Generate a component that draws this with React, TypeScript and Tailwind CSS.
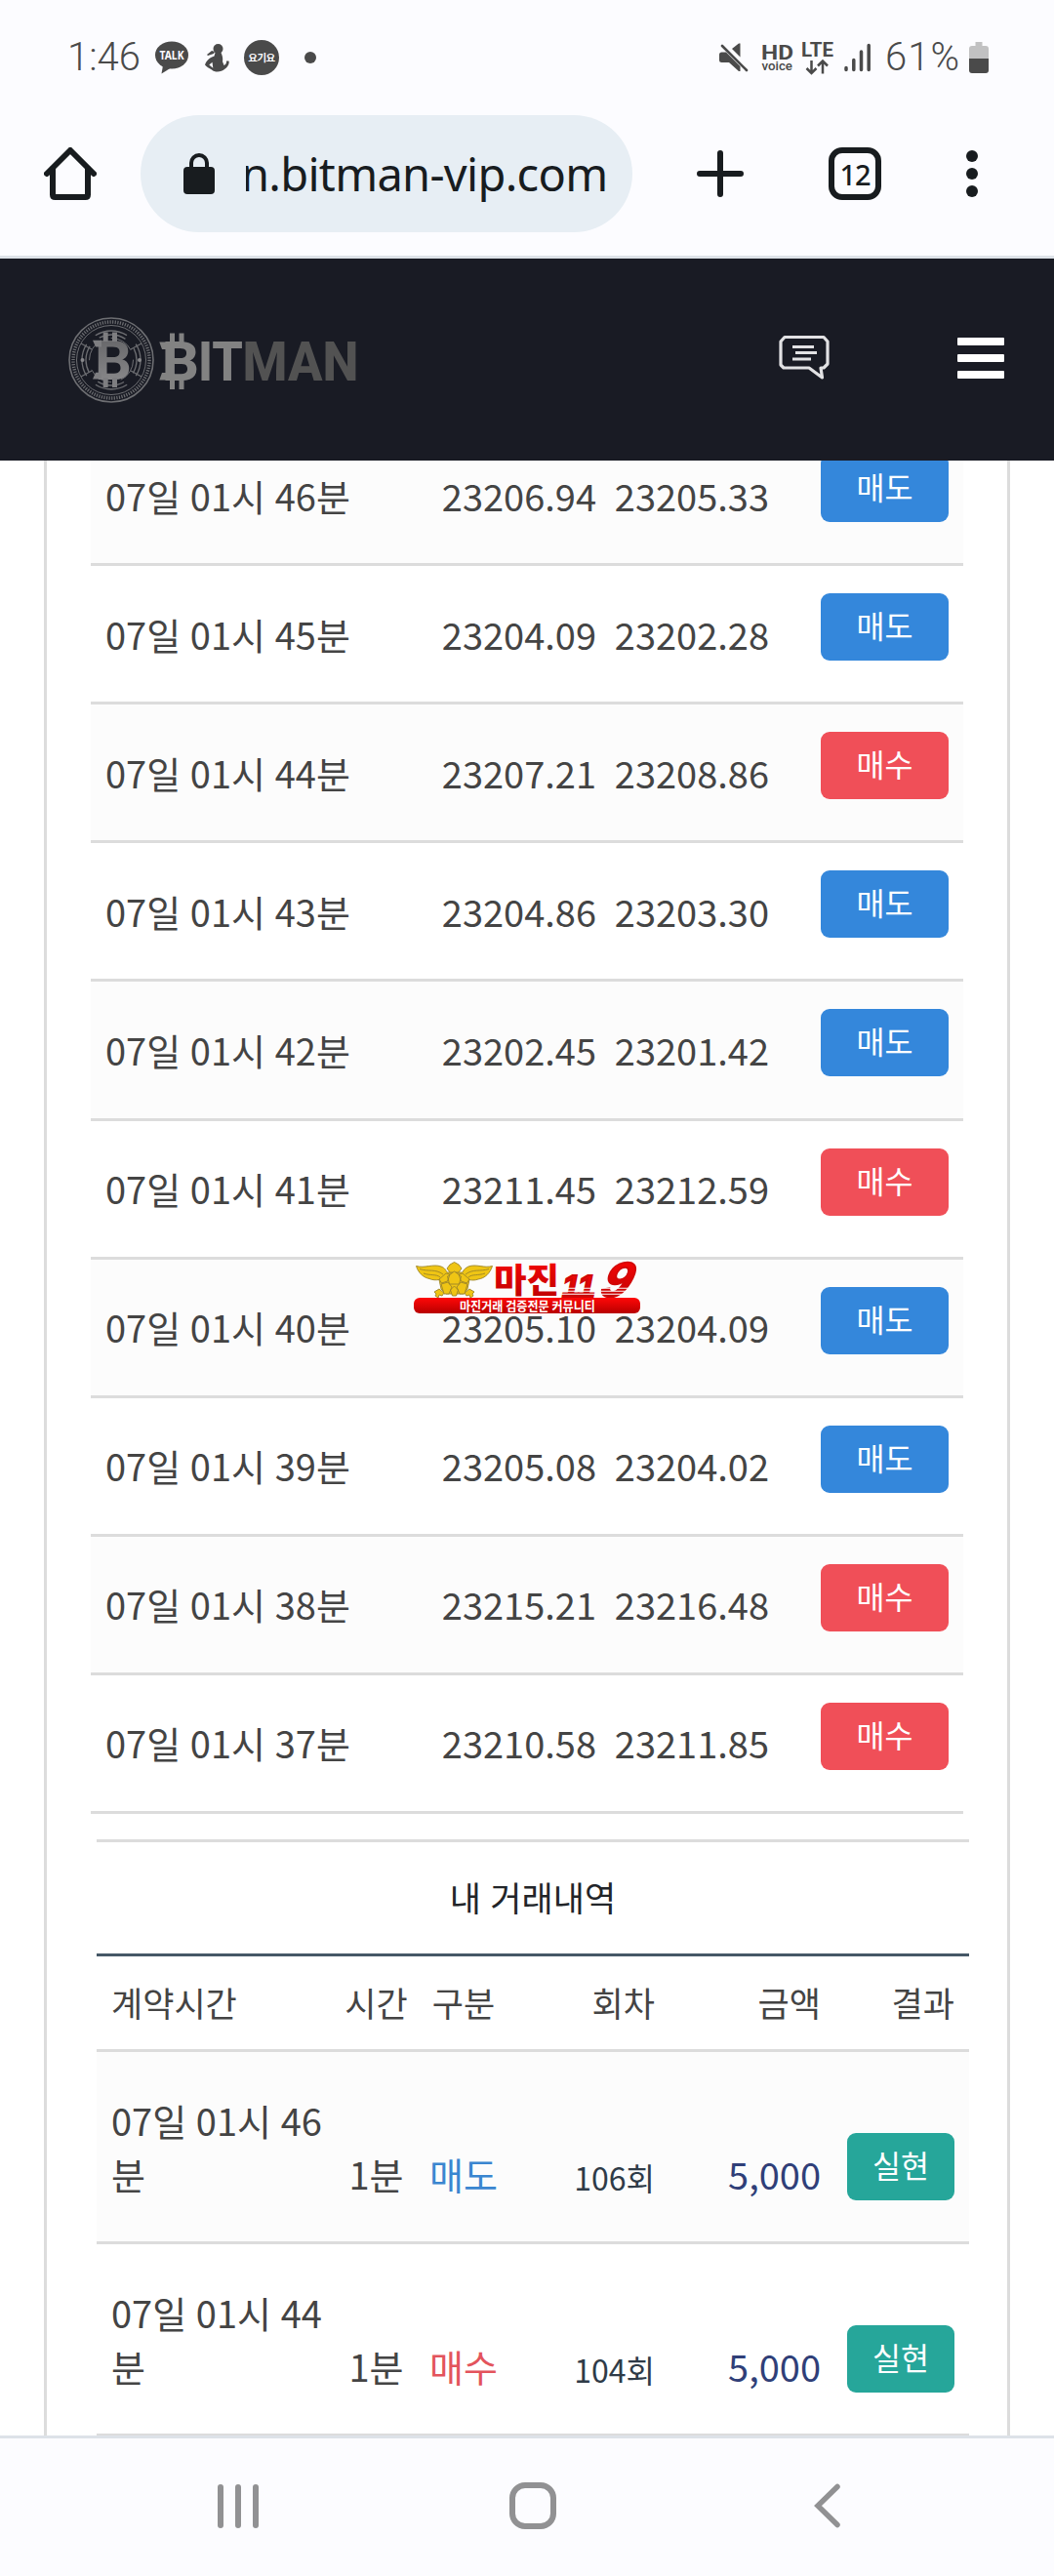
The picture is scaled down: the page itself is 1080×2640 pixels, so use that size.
type Side = "매도" | "매수";

const history: { minute: number; open: string; close: string; side: Side }[] = [
  { minute: 46, open: "23206.94", close: "23205.33", side: "매도" },
  { minute: 45, open: "23204.09", close: "23202.28", side: "매도" },
  { minute: 44, open: "23207.21", close: "23208.86", side: "매수" },
  { minute: 43, open: "23204.86", close: "23203.30", side: "매도" },
  { minute: 42, open: "23202.45", close: "23201.42", side: "매도" },
  { minute: 41, open: "23211.45", close: "23212.59", side: "매수" },
  { minute: 40, open: "23205.10", close: "23204.09", side: "매도" },
  { minute: 39, open: "23205.08", close: "23204.02", side: "매도" },
  { minute: 38, open: "23215.21", close: "23216.48", side: "매수" },
  { minute: 37, open: "23210.58", close: "23211.85", side: "매수" },
];

const trades: { minute: number; side: Side; round: string; amount: string }[] = [
  { minute: 46, side: "매도", round: "106회", amount: "5,000" },
  { minute: 44, side: "매수", round: "104회", amount: "5,000" },
];

function StatusBar() {
  return (
    <div className="flex h-[118px] items-start justify-between pt-[36px] pr-[67px] pl-[69px] text-[#4a4a4a]">
      <div className="flex h-[46px] items-center">
        <span className="w-[90px] font-['Roboto'] text-[40px] leading-[46px] font-light">1:46</span>
        <svg width="34" height="34" viewBox="0 0 34 34" fill="#4a4a4a">
          <ellipse cx="17" cy="14.5" rx="17" ry="14" />
          <path d="M8 25 L6.5 33.5 L17 27 Z" />
          <text x="17" y="19" fill="#fcfcff" fontFamily="Noto Sans" fontWeight="700" fontSize="12" textAnchor="middle" textLength="25" lengthAdjust="spacingAndGlyphs">TALK</text>
        </svg>
        <svg className="ml-[17px]" width="25" height="29" viewBox="0 0 25 29" fill="#4a4a4a">
          <circle cx="13.5" cy="5" r="5" />
          <path d="M2 11 L7 7 L10 8 L9 10 L3 12 Z" />
          <path fillRule="evenodd" d="M10.500 9 L16.500 9 C18 12 18.500 15 18 18 L19.500 22 C21.500 21 22.200 19.500 22 17.500 L24.500 17.500 C25.500 21 22.500 24 20 26 C17 29 10 29.500 7 26.500 C4 25 2 23.500 0 21.500 C1 18 4.500 14 9.500 12.500 Z M4.300 21.500 L8.300 24.700 L7.500 18.800 Z" />
        </svg>
        <div className="ml-[15px] flex size-[36px] items-center justify-center rounded-full bg-[#4a4a4a] font-['Noto_Sans_CJK_KR'] text-[10.500px] leading-none font-bold tracking-[-0.500px] whitespace-nowrap text-[#fcfcff]">
          요기요
        </div>
        <div className="ml-[26px] size-[12px] rounded-full bg-[#4a4a4a]" />
      </div>
      <div className="flex h-[46px] items-center">
        <svg width="30" height="30" viewBox="0 0 30 30" fill="#4a4a4a">
          <path d="M0 12 Q0 9.500 2.500 9.500 L7 9.500 L21.500 24 L21.500 29 L20 29 L10 20 L2.500 20 Q0 20 0 17.500 Z" />
          <path d="M13 6 L20 .6 L21.500 .6 L21.500 14.500 Z" />
          <path d="M3 3 L28 28" stroke="#4a4a4a" strokeWidth="2.600" strokeLinecap="round" />
        </svg>
        <svg className="ml-[13px] overflow-visible" width="33" height="32" viewBox="0 0 33 32" fill="#4a4a4a">
          <text x="0" y="18" fontFamily="Roboto" fontWeight="700" fontSize="20.500" textLength="33" lengthAdjust="spacingAndGlyphs">HD</text>
          <text x="0.500" y="29" fontFamily="Roboto" fontWeight="500" fontSize="13" textLength="31.500" lengthAdjust="spacingAndGlyphs">voice</text>
        </svg>
        <svg className="ml-[8px] overflow-visible" width="33" height="36" viewBox="0 0 33 36" fill="#4a4a4a">
          <text x="0" y="16.700" fontFamily="Roboto" fontWeight="700" fontSize="20.500" textLength="33" lengthAdjust="spacingAndGlyphs">LTE</text>
          <path d="M10.500 21 V34 M5.500 29 L10.500 34 L15.500 29 M22 34.500 V21.500 M17 26.500 L22 21.500 L27 26.500" fill="none" stroke="#4a4a4a" strokeWidth="2.500" />
        </svg>
        <svg className="ml-[11px]" width="28" height="30" viewBox="0 0 28 30" stroke="#4a4a4a" strokeWidth="3.500" strokeLinecap="round">
          <path d="M2 25.500V27.500M9.800 17.500V27.500M17.500 9V27.500M25.200 2.500V27.500" />
        </svg>
        <span className="ml-[14px] w-[86px] font-['Roboto'] text-[40px] leading-[46px] font-light tracking-[1px]">61%</span>
        <svg width="20" height="32" viewBox="0 0 20 32">
          <path d="M6.500 0H13.500V4H17Q20 4 20 7V18H0V7Q0 4 3 4H6.500Z" fill="#c1c1c2" />
          <path d="M0 17H20V29Q20 32 17 32H3Q0 32 0 29Z" fill="#4a4a4a" />
        </svg>
      </div>
    </div>
  );
}

function BrowserBar() {
  return (
    <div className="flex h-[120px] items-center pl-[45px]">
      <svg width="54" height="54" viewBox="0 0 54 54" fill="none" stroke="#181c1f" strokeWidth="6" strokeLinecap="round" strokeLinejoin="round">
        <path d="M3 27 L27 3 L51 27" />
        <path d="M9 22 V48.500 Q9 51 11.500 51 H42.500 Q45 51 45 48.500 V22" />
      </svg>
      <div className="ml-[45px] flex h-[120px] w-[504px] items-center rounded-full bg-[#e7eef4] pl-[44px]">
        <svg width="32" height="42" viewBox="0 0 32 42">
          <path d="M8 16V10a8 8 0 0 1 16 0v6" fill="none" stroke="#181c1f" strokeWidth="4" />
          <rect y="14" width="32" height="28" rx="4" fill="#181c1f" />
        </svg>
        <div className="ml-[32px] flex w-[374px] overflow-hidden">
          <span className="-ml-[5px] font-['Noto_Sans'] text-[47px] leading-[64px] tracking-[-0.700px] whitespace-nowrap text-[#181c1f]">n.bitman-vip.com</span>
        </div>
      </div>
      <svg className="ml-[66px]" width="48" height="48" viewBox="0 0 48 48" stroke="#181c1f" strokeWidth="6" strokeLinecap="round">
        <path d="M24 3V45M3 24H45" />
      </svg>
      <div className="ml-[87px] flex size-[54px] items-center justify-center rounded-[14px] border-[6px] border-[#181c1f] font-['Noto_Sans'] text-[29px] leading-none font-medium tracking-[-1px] text-[#181c1f]">
        12
      </div>
      <div className="ml-[87px] flex flex-col gap-[6px]">
        <div className="size-[12px] rounded-full bg-[#181c1f]" />
        <div className="size-[12px] rounded-full bg-[#181c1f]" />
        <div className="size-[12px] rounded-full bg-[#181c1f]" />
      </div>
    </div>
  );
}

function Logo() {
  return (
    <svg className="overflow-visible" width="300" height="92" viewBox="0 0 300 92">
      <defs>
        <linearGradient id="coin" x1="0" y1="0" x2="0" y2="1">
          <stop offset="0" stopColor="#5f5f62" />
          <stop offset="1" stopColor="#909092" />
        </linearGradient>
      </defs>
      <g fill="none" stroke="#6d6e72">
        <circle cx="46" cy="46" r="43" strokeWidth="1.600" />
        <circle cx="46" cy="46" r="39" strokeWidth="3.500" strokeDasharray="1.200 1.400" />
        <circle cx="46" cy="46" r="35.500" strokeWidth="1" />
        <circle cx="46" cy="46" r="30" strokeWidth="1.300" strokeDasharray="34 13" strokeDashoffset="17" />
        <circle cx="46" cy="46" r="26" strokeWidth="1.300" strokeDasharray="28 13" strokeDashoffset="14" />
        <circle cx="46" cy="46" r="22.500" strokeWidth="1" strokeDasharray="25 10" />
        <path d="M15 29L26 35M66 35L77 29M15 63L26 57M66 57L77 63" strokeWidth="1.300" />
      </g>
      <circle cx="16.500" cy="46" r="2" fill="#88888b" />
      <circle cx="75" cy="46" r="2" fill="#88888b" />
      <text x="29" y="65.500" fontFamily="Roboto" fontWeight="700" fontSize="56" fill="url(#coin)" textLength="38" lengthAdjust="spacingAndGlyphs">B</text>
      <path d="M27 25.700H36V32.500H30ZM27 65.500H36V58.700H30Z" fill="#7e7e81" />
      <path d="M37.700 17.500H42.700V27H37.700ZM47 17.500H52V27H47ZM37.700 64H42.700V74H37.700ZM47 64H52V74H47Z" fill="#7e7e81" />
      <text x="98" y="66.500" fontFamily="Roboto" fontWeight="800" fontSize="55" fill="#828282" textLength="38" lengthAdjust="spacingAndGlyphs">B</text>
      <path d="M95.300 27.400H106V35H98ZM95.300 66.500H106V59H98ZM106 18.500H111V30H106ZM115.500 18.500H120.500V30H115.500ZM106 64H111V76H106ZM115.500 64H120.500V76H115.500Z" fill="#828282" />
      <text x="135" y="66.500" fontFamily="Roboto" fontWeight="800" fontSize="55" fill="#828282" textLength="46" lengthAdjust="spacingAndGlyphs">IT</text>
      <text x="180.500" y="66.500" fontFamily="Roboto" fontWeight="800" fontSize="55" fill="#525252" textLength="119" lengthAdjust="spacingAndGlyphs">MAN</text>
    </svg>
  );
}

function SiteHeader() {
  return (
    <header className="flex h-[207px] items-center bg-[#191b24] pl-[68px]">
      <Logo />
      <svg className="-mt-[3px] ml-[429px]" width="54" height="48" viewBox="0 0 54 48" fill="none" stroke="#e2e2e4" strokeWidth="3.200" strokeLinejoin="round">
        <path d="M7 2.500H47L51 7V30L47 34H44L45.500 44L32 34H6L3 31V7Z" />
        <path d="M15 12.500H37M18 18.500H40M15 25H34" strokeWidth="2.800" />
      </svg>
      <div className="-mt-[3px] ml-[130px] flex flex-col gap-[9px]">
        <div className="h-[8px] w-[48px] rounded-[1px] bg-white" />
        <div className="h-[8px] w-[48px] rounded-[1px] bg-white" />
        <div className="h-[8px] w-[48px] rounded-[1px] bg-white" />
      </div>
    </header>
  );
}

function SideButton({ side }: { side: Side }) {
  return (
    <div className={`flex h-[69px] w-[131px] justify-center rounded-[9px] text-[31.500px] leading-[64px] text-white ${side === "매도" ? "bg-[#3487db]" : "bg-[#f04f58]"}`}>
      {side}
    </div>
  );
}

function HistoryTable() {
  return (
    <div className="-mt-[34px] ml-[45px] w-[894px]">
      {history.map((row, i) => (
        <div
          key={row.minute}
          className={`grid h-[142.110px] grid-cols-[331px_172px_177px_1fr] items-start border-b-[3px] border-[#dcdcdc] px-[15px] ${i % 2 === 0 ? "bg-[#fcfcfc]" : "bg-white"}`}
        >
          <div className="pt-[41.500px] [word-spacing:1.200px]">07일 01시 {row.minute}분</div>
          <div className="pt-[41.500px] text-right">{row.open}</div>
          <div className="pt-[41.500px] text-right">{row.close}</div>
          <div className="flex justify-end pt-[28px]">
            <SideButton side={row.side} />
          </div>
        </div>
      ))}
    </div>
  );
}

function TradesTable() {
  return (
    <div className="mt-[26px] ml-[51px] w-[894px] border-t-[3px] border-[#dcdcdc]">
      <h2 className="flex h-[117px] items-center justify-center border-b-[3px] border-[#465867] pb-[3px] text-[35px] text-[#222529] [word-spacing:1.500px]">내 거래내역</h2>
      <div className="grid h-[98px] grid-cols-[226px_91px_88px_152px_170px_1fr] items-center border-b-[3px] border-[#dcdcdc] px-[15px] pb-[2px] text-[35px]">
        <div>계약시간</div>
        <div className="text-center">시간</div>
        <div className="text-center">구분</div>
        <div className="text-right">회차</div>
        <div className="text-right">금액</div>
        <div className="text-right">결과</div>
      </div>
      {trades.map((t, i) => (
        <div
          key={t.minute}
          className={`grid h-[197px] grid-cols-[226px_91px_88px_152px_170px_1fr] items-start border-b-[3px] border-[#dcdcdc] px-[15px] ${i % 2 === 0 ? "bg-[#fcfcfc]" : "bg-white"}`}
        >
          <div className="pt-[42px] whitespace-nowrap [word-spacing:1.200px]">
            07일 01시 {t.minute}
            <br />분
          </div>
          <div className="pt-[97px] text-center">1분</div>
          <div className={`pt-[97px] text-center ${t.side === "매도" ? "text-[#3a86d0]" : "text-[#e3545c]"}`}>{t.side}</div>
          <div className="pt-[101px] text-right text-[32px] text-[#2f3b48]">{t.round}</div>
          <div className="pt-[97px] text-right text-[#303f78]">{t.amount}</div>
          <div className="flex justify-end pt-[83px]">
            <div className="flex h-[69px] w-[110px] justify-center rounded-[9px] bg-[#26a69a] text-[31.500px] leading-[64px] text-white">실현</div>
          </div>
        </div>
      ))}
    </div>
  );
}

function Watermark() {
  return (
    <svg className="absolute top-[1290px] left-[420px] overflow-visible" width="240" height="60" viewBox="0 0 240 60">
      <defs>
        <linearGradient id="red" x1="0" y1="0" x2="0" y2="1">
          <stop offset="0" stopColor="#ff0808" />
          <stop offset="1" stopColor="#b80000" />
        </linearGradient>
      </defs>
      <g fill="#efc514" stroke="#9c8428" strokeWidth="0.900" strokeLinejoin="round">
        <path d="M6.500 7.500 C15 10 24 5 32 8 C36 9.500 37 12 38 14 L54 14 C55 11 57 9.500 60 8 C68 5 76 10 84.500 7.500 C82 15 77 20 70 21 C66 22.500 63 22 61 21.500 L59 31 L55 36 L37 36 L32 31 L30 21.500 C27 22 23 22 20 20.500 C13 19 8.500 14 6.500 7.500 Z" />
        <path d="M10 10.500C19 13.500 26 10 34 16M14 15C21 17.500 27 15.500 31 19M81 10.500C72 13.500 65 10 57 16M77 15C70 17.500 64 15.500 60 19" fill="none" />
        <path d="M38 10L41 6L45.500 3.500L50 6L53 10L50 14H41Z" />
        <path d="M45.500 13l7 5-2 8h-10l-2-8zM37 15l4 1-2.500 7-6 2-2.500-4zM54 15l-4 1 2.500 7 6 2 2.500-4zM32 26l7-2 4 5-3 7h-5zM59 26l-7-2-4 5 3 7h5zM45.500 28l4 4-2 6h-4l-2-6z" />
        <path d="M30 31l5 4-2 3-3-1-1 3-3-2 1-2-2-2zM61 31l-5 4 2 3 3-1 1 3 3-2-1-2 2-2z" />
      </g>
      <text x="86" y="35" fontFamily="Noto Sans CJK KR" fontWeight="900" fontSize="35.500" fill="url(#red)" textLength="67" lengthAdjust="spacingAndGlyphs">마진</text>
      <g fontFamily="Liberation Sans" fontWeight="700" fontStyle="italic" fill="url(#red)" stroke="#d00808">
        <text x="156" y="39" fontSize="30.500" strokeWidth="1.800" textLength="34" lengthAdjust="spacingAndGlyphs">11</text>
        <text transform="translate(193 39) skewX(-18)" fontSize="51" strokeWidth="1.500" textLength="30" lengthAdjust="spacingAndGlyphs">9</text>
      </g>
      <path d="M152 30.300H232M152 33.300H232M152 36.300H232" stroke="#fcfcfc" strokeWidth="1.100" />
      <rect x="4" y="40" width="232" height="16" rx="6" fill="url(#red)" />
      <text x="120.500" y="52.800" fontFamily="Noto Sans CJK KR" fontWeight="700" fontSize="13" fill="#fff" textAnchor="middle" textLength="139" lengthAdjust="spacingAndGlyphs">마진거래 검증전문 커뮤니티</text>
    </svg>
  );
}

function NavBar() {
  return (
    <nav className="flex h-[144px] items-center border-t-[3px] border-[#dde2e8] bg-[#fcfcff] pb-[3px] pl-[223px]">
      <div className="flex gap-[12px]">
        <div className="h-[45px] w-[6px] rounded-full bg-[#919193]" />
        <div className="h-[45px] w-[6px] rounded-full bg-[#919193]" />
        <div className="h-[45px] w-[6px] rounded-full bg-[#919193]" />
      </div>
      <div className="ml-[257px] size-[48px] rounded-[16px] border-[6px] border-[#919193]" />
      <svg className="ml-[264px]" width="28" height="46" viewBox="0 0 28 46" fill="none" stroke="#919193" strokeWidth="5.500" strokeLinecap="round">
        <path d="M24 3.500L4 23L24 42.500" />
      </svg>
    </nav>
  );
}

export default function App() {
  return (
    <div className="relative flex h-[2640px] w-[1080px] flex-col overflow-hidden bg-[#fcfcff]">
      <div className="h-[265px] border-b-[3px] border-[#dde2e8]">
        <StatusBar />
        <BrowserBar />
      </div>
      <SiteHeader />
      <main className="h-[2024px] overflow-hidden bg-white font-['Noto_Sans_CJK_KR',sans-serif] text-[38px] leading-[55px] text-[#444444]">
        <div className="mx-[45px] flow-root h-full border-x-[3px] border-[#dcdcdc]">
          <HistoryTable />
          <TradesTable />
        </div>
      </main>
      <NavBar />
      <Watermark />
    </div>
  );
}
